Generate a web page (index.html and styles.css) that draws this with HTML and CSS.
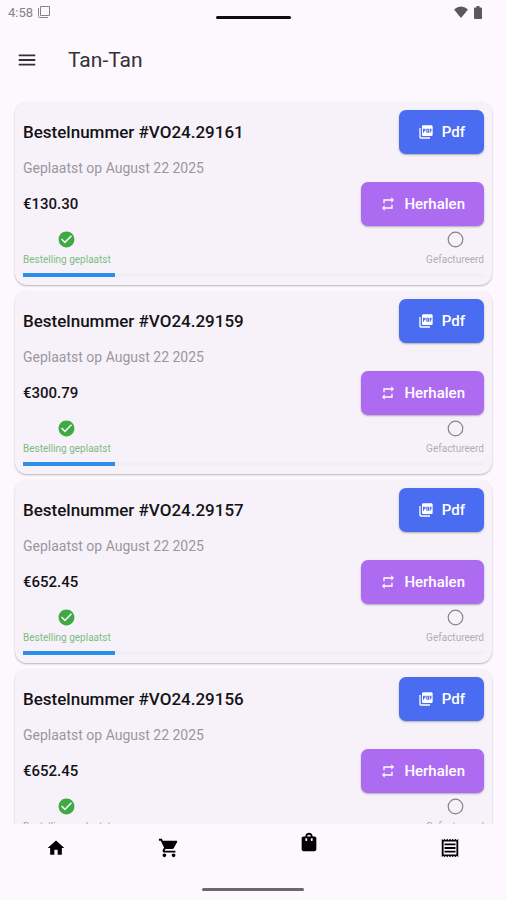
FILE: index.html
```html
<!DOCTYPE html>
<html lang="nl">
<head>
<meta charset="utf-8">
<meta name="viewport" content="width=device-width, initial-scale=1">
<title>Tan-Tan</title>
<link rel="stylesheet" href="styles.css">
</head>
<body>
<svg class="sprite" aria-hidden="true">
  <symbol id="pdf" viewBox="0 0 24 24"><path d="M20 2H8c-1.100 0-2 .9-2 2v12c0 1.100.9 2 2 2h12c1.100 0 2-.9 2-2V4c0-1.100-.9-2-2-2zm-8.500 7.500c0 .83-.67 1.500-1.500 1.500H9v2H7.500V7H10c.83 0 1.500.67 1.500 1.500v1zm5 2c0 .83-.67 1.500-1.500 1.500h-2.500V7H15c.83 0 1.500.67 1.500 1.500v3zm4-3H19v1h1.500V11H19v2h-1.500V7h3v1.500zM9 9.500h1v-1H9v1zM4 6H2v14c0 1.100.9 2 2 2h14v-2H4V6zm10 5.500h1v-3h-1v3z"/></symbol>
  <symbol id="repeat" viewBox="0 0 24 24"><path d="M7 7h10v3l4-4-4-4v3H5v6h2V7zm10 10H7v-3l-4 4 4 4v-3h12v-6h-2v4z"/></symbol>
  <symbol id="check" viewBox="0 0 24 24"><path d="M12 2C6.480 2 2 6.480 2 12s4.480 10 10 10 10-4.480 10-10S17.520 2 12 2zm-2 15l-5-5 1.410-1.410L10 14.170l7.590-7.590L19 8l-9 9z"/></symbol>
  <symbol id="circle" viewBox="0 0 24 24"><circle cx="12" cy="12" r="9.200" fill="none" stroke="currentColor" stroke-width="1.500"/></symbol>
</svg>

<header>
  <div class="status">
    <span class="clock">4:58
      <svg viewBox="0 0 14 14"><path d="M3.500 1.500h9v9h-9zM1.500 3v8.500q0 1 1 1H11" fill="none" stroke="currentColor"/></svg>
    </span>
    <span class="notch"></span>
    <span class="signals">
      <svg class="wifi" viewBox="0 0 14 12"><path d="M7 12L0 3.500Q7-2.500 14 3.500z"/></svg>
      <svg class="battery" viewBox="0 0 8 13"><path d="M2.500 0h3v1.500H7q1 0 1 1V12q0 1-1 1H1q-1 0-1-1V2.500q0-1 1-1h1.500z"/></svg>
    </span>
  </div>
  <div class="appbar">
    <button class="menu" aria-label="Menu"><svg viewBox="0 0 24 24"><path d="M3 18h18v-2H3v2zm0-5h18v-2H3v2zm0-7v2h18V6H3z"/></svg></button>
    <h1>Tan-Tan</h1>
  </div>
</header>

<main class="orders">
  <article class="card">
    <div class="row"><h2>Bestelnummer #VO24.29161</h2><button class="btn pdf"><svg><use href="#pdf"/></svg>Pdf</button></div>
    <p class="date">Geplaatst op August 22 2025</p>
    <div class="row"><span class="price">€130.30</span><button class="btn again"><svg><use href="#repeat"/></svg>Herhalen</button></div>
    <div class="steps"><span class="step done"><svg><use href="#check"/></svg>Bestelling geplaatst</span><span class="step"><svg><use href="#circle"/></svg>Gefactureerd</span></div>
    <div class="track"><div class="fill"></div></div>
  </article>
  <article class="card">
    <div class="row"><h2>Bestelnummer #VO24.29159</h2><button class="btn pdf"><svg><use href="#pdf"/></svg>Pdf</button></div>
    <p class="date">Geplaatst op August 22 2025</p>
    <div class="row"><span class="price">€300.79</span><button class="btn again"><svg><use href="#repeat"/></svg>Herhalen</button></div>
    <div class="steps"><span class="step done"><svg><use href="#check"/></svg>Bestelling geplaatst</span><span class="step"><svg><use href="#circle"/></svg>Gefactureerd</span></div>
    <div class="track"><div class="fill"></div></div>
  </article>
  <article class="card">
    <div class="row"><h2>Bestelnummer #VO24.29157</h2><button class="btn pdf"><svg><use href="#pdf"/></svg>Pdf</button></div>
    <p class="date">Geplaatst op August 22 2025</p>
    <div class="row"><span class="price">€652.45</span><button class="btn again"><svg><use href="#repeat"/></svg>Herhalen</button></div>
    <div class="steps"><span class="step done"><svg><use href="#check"/></svg>Bestelling geplaatst</span><span class="step"><svg><use href="#circle"/></svg>Gefactureerd</span></div>
    <div class="track"><div class="fill"></div></div>
  </article>
  <article class="card">
    <div class="row"><h2>Bestelnummer #VO24.29156</h2><button class="btn pdf"><svg><use href="#pdf"/></svg>Pdf</button></div>
    <p class="date">Geplaatst op August 22 2025</p>
    <div class="row"><span class="price">€652.45</span><button class="btn again"><svg><use href="#repeat"/></svg>Herhalen</button></div>
    <div class="steps"><span class="step done"><svg><use href="#check"/></svg>Bestelling geplaatst</span><span class="step"><svg><use href="#circle"/></svg>Gefactureerd</span></div>
    <div class="track"><div class="fill"></div></div>
  </article>
</main>

<footer>
  <nav>
    <a href="#home" aria-label="Home"><svg class="small" viewBox="0 0 24 24"><path d="M10 20v-6h4v6h5v-8h3L12 3 2 12h3v8z"/></svg></a>
    <a href="#cart" aria-label="Winkelwagen"><svg viewBox="0 0 24 24"><path d="M7 18c-1.100 0-1.990.9-1.990 2S5.900 22 7 22s2-.9 2-2-.9-2-2-2zM1 2v2h2l3.600 7.590-1.350 2.450c-.16.28-.25.61-.25.960 0 1.100.9 2 2 2h12v-2H7.420c-.14 0-.25-.11-.25-.25l.03-.12.9-1.630h7.450c.75 0 1.410-.41 1.750-1.030l3.580-6.490c.08-.14.12-.31.12-.48 0-.55-.45-1-1-1H5.210l-.94-2H1zm16 16c-1.100 0-1.990.9-1.990 2s.89 2 1.990 2 2-.9 2-2-.9-2-2-2z"/></svg></a>
    <a class="current" href="#orders" aria-label="Bestellingen" aria-current="page"><svg viewBox="0 0 24 24"><path d="M18 6h-2c0-2.210-1.790-4-4-4S8 3.790 8 6H6c-1.100 0-2 .9-2 2v12c0 1.100.9 2 2 2h12c1.100 0 2-.9 2-2V8c0-1.100-.9-2-2-2zm-8 4c0 .55-.45 1-1 1s-1-.45-1-1V8h2v2zm2-6c1.100 0 2 .9 2 2h-4c0-1.100.9-2 2-2zm4 6c0 .55-.45 1-1 1s-1-.45-1-1V8h2v2z"/></svg></a>
    <a href="#invoices" aria-label="Facturen"><svg viewBox="0 0 24 24"><path d="M19.500 3.500L18 2l-1.500 1.500L15 2l-1.500 1.500L12 2l-1.500 1.500L9 2 7.500 3.500 6 2 4.500 3.500 3 2v20l1.500-1.500L6 22l1.500-1.500L9 22l1.500-1.500L12 22l1.500-1.500L15 22l1.500-1.500L18 22l1.500-1.500L21 22V2l-1.500 1.500zM19 19.090H5V4.910h14v14.180zM6 15h12v2H6zm0-4h12v2H6zm0-4h12v2H6z"/></svg></a>
  </nav>
  <div class="handle"></div>
</footer>
</body>
</html>
```
FILE: styles.css
```css
* { box-sizing: border-box; }
body {
  margin: 0;
  height: 100vh;
  display: flex;
  flex-direction: column;
  overflow: hidden;
  background: #fdf7fe;
  color: #1d1b20;
  font-family: Roboto, sans-serif;
}
h1, h2, p { margin: 0; }
svg { display: block; fill: currentColor; flex: none; }
button { border: 0; font-family: inherit; cursor: pointer; }
.sprite { position: absolute; width: 0; height: 0; }

.status {
  display: grid;
  grid-template-columns: 1fr 75px 1fr;
  align-items: center;
  height: 24px;
  padding: 0 8px;
  color: #858288;
}
.clock { display: flex; align-items: center; gap: 4px; font-size: 13px; }
.clock svg { width: 14px; height: 14px; }
.notch { height: 3px; margin-top: 10px; border-radius: 2px; background: #0e0c10; }
.signals { display: flex; align-items: center; justify-content: flex-end; gap: 6px; padding-right: 16px; color: #5a585c; }
.wifi { width: 14px; height: 12px; }
.battery { width: 8px; height: 13px; }

.appbar { display: flex; align-items: center; gap: 30px; height: 72px; padding-left: 16px; }
.menu { padding: 0; background: none; color: #333136; }
.menu svg { width: 22px; height: 22px; }
h1 { font-size: 21px; font-weight: 400; color: #333136; }

.orders {
  flex: 1;
  min-height: 0;
  overflow: hidden;
  display: flex;
  flex-direction: column;
  gap: 6px;
  padding: 6px 14px 0 15px;
}
.card {
  flex: none;
  padding: 8px;
  border-radius: 12px;
  background: #f7f2fa;
  box-shadow: 0 1px 2px rgba(0, 0, 0, .28);
}
.row { display: flex; align-items: center; justify-content: space-between; }
h2 { font-size: 17px; font-weight: 500; color: #141217; }
.date { font-size: 14px; line-height: 28px; color: #9a979d; }
.price { font-size: 15px; font-weight: 500; color: #141217; }
.btn {
  display: flex;
  align-items: center;
  gap: 8px;
  height: 44px;
  padding: 0 19px;
  border-radius: 7px;
  color: #fff;
  font-size: 15px;
  font-weight: 500;
  box-shadow: 0 1px 2px rgba(0, 0, 0, .3);
}
.btn svg { width: 16px; height: 16px; }
.pdf { background: #4a6cf0; }
.again { background: #ad6bf1; }
.steps { display: flex; justify-content: space-between; padding-top: 4px; }
.step {
  display: flex;
  flex-direction: column;
  align-items: center;
  gap: 4px;
  color: #b0adb3;
  font-size: 10px;
  line-height: 14px;
}
.step svg { width: 19px; height: 19px; color: #858288; }
.done { color: #7dbd80; }
.done svg { color: #3dab41; }
.track { height: 4px; margin-top: 6px; background: #f2eef5; }
.fill { width: 20%; height: 100%; background: #2a8fea; }

footer { display: flex; flex-direction: column; align-items: center; }
nav { display: flex; align-self: stretch; height: 48px; }
nav a { display: flex; flex: 2; align-items: center; justify-content: center; color: #000; }
nav a.current { flex: 3; padding-bottom: 12px; }
nav svg { width: 22px; height: 22px; }
nav svg.small { width: 20px; height: 20px; }
.handle { width: 102px; height: 3px; margin: 16px 0 9px; border-radius: 2px; background: #6b686d; }
```
